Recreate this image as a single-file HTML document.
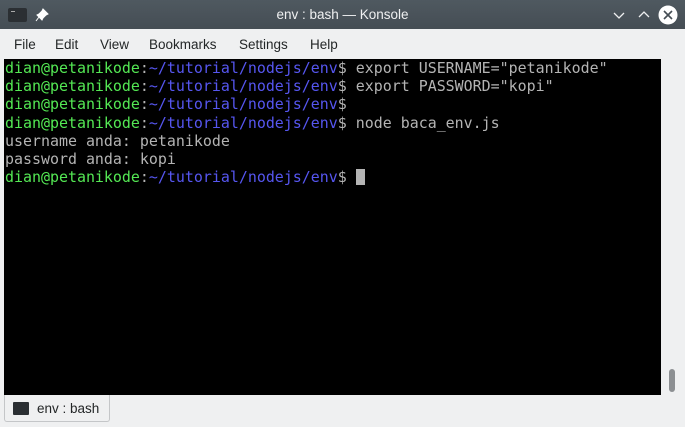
<!DOCTYPE html>
<html><head><meta charset="utf-8"><style>
*{margin:0;padding:0;box-sizing:border-box}
body{width:685px;height:427px;overflow:hidden;background:#eff0f1;font-family:"Liberation Sans","DejaVu Sans",sans-serif;position:relative}
.title{position:absolute;left:0;top:0;width:685px;height:29px;background:linear-gradient(#4f5960,#454d54);color:#eff0f1;font-size:13.5px;text-align:center;line-height:29px}
.menu{position:absolute;top:29px;left:0;width:685px;height:30px;font-size:13.5px;color:#232627}
.menu span{position:absolute;top:8px}
.term{position:absolute;left:4px;top:59px;width:657px;height:336px;background:#000;font-family:"DejaVu Sans Mono",monospace;font-size:14.95px;line-height:18.2px;color:#b4b4b4;white-space:pre;padding-left:1px;padding-top:0}
.g{color:#54e854}.b{color:#5656f0}
.cur{display:inline-block;width:9px;height:16px;background:#b4b4b4;vertical-align:-3px}
.sb{position:absolute;left:669px;top:369px;width:6px;height:23px;border-radius:3px;background:#8c8f92}
.tab{position:absolute;left:4px;top:395px;width:106px;height:27px;border:1px solid #c4c6c8;border-top:none;border-radius:0 0 3px 3px;background:#eff0f1;font-size:13.5px;color:#232627;white-space:nowrap}
</style></head><body>
<div class="title">env : bash — Konsole
<div style="position:absolute;left:8px;top:8px;width:19px;height:14px;background:#2b2f33;border-radius:2px"><div style="position:absolute;left:3px;top:3px;width:4px;height:1px;background:#aaa"></div></div>
<svg style="position:absolute;left:35px;top:8px" width="14" height="14" viewBox="0 0 14 14"><path d="M8 1l5 5-2 1-3 3-1 2-5-5 2-1 3-3z M4 9l-3 4" fill="#fff" stroke="#fff" stroke-width="1"/></svg>
<svg style="position:absolute;left:612px;top:10px" width="14" height="10"><path d="M2 3l5 5 5-5" fill="none" stroke="#eff0f1" stroke-width="1.3"/></svg>
<svg style="position:absolute;left:637px;top:9px" width="14" height="10"><path d="M2 8l5-5 5 5" fill="none" stroke="#eff0f1" stroke-width="1.3"/></svg>
<svg style="position:absolute;left:658px;top:5px" width="20" height="20"><circle cx="10" cy="10" r="9.5" fill="#fff"/><path d="M6 6l8 8M14 6l-8 8" stroke="#454d54" stroke-width="1.6"/></svg>
</div>
<div class="menu"><span style="left:14px">File</span><span style="left:55px">Edit</span><span style="left:100px">View</span><span style="left:149px">Bookmarks</span><span style="left:239px">Settings</span><span style="left:310px">Help</span></div>
<div class="term"><span class="g">dian@petanikode</span>:<span class="b">~/tutorial/nodejs/env</span>$ export USERNAME="petanikode"
<span class="g">dian@petanikode</span>:<span class="b">~/tutorial/nodejs/env</span>$ export PASSWORD="kopi"
<span class="g">dian@petanikode</span>:<span class="b">~/tutorial/nodejs/env</span>$
<span class="g">dian@petanikode</span>:<span class="b">~/tutorial/nodejs/env</span>$ node baca_env.js
username anda: petanikode
password anda: kopi
<span class="g">dian@petanikode</span>:<span class="b">~/tutorial/nodejs/env</span>$ <span class="cur"></span></div>
<div class="sb"></div>
<div class="tab"><div style="position:absolute;left:8px;top:7px;width:16px;height:13px;background:#2b2f33;border-radius:1px"></div><span style="position:absolute;left:32px;top:6px">env : bash</span></div>
</body></html>
